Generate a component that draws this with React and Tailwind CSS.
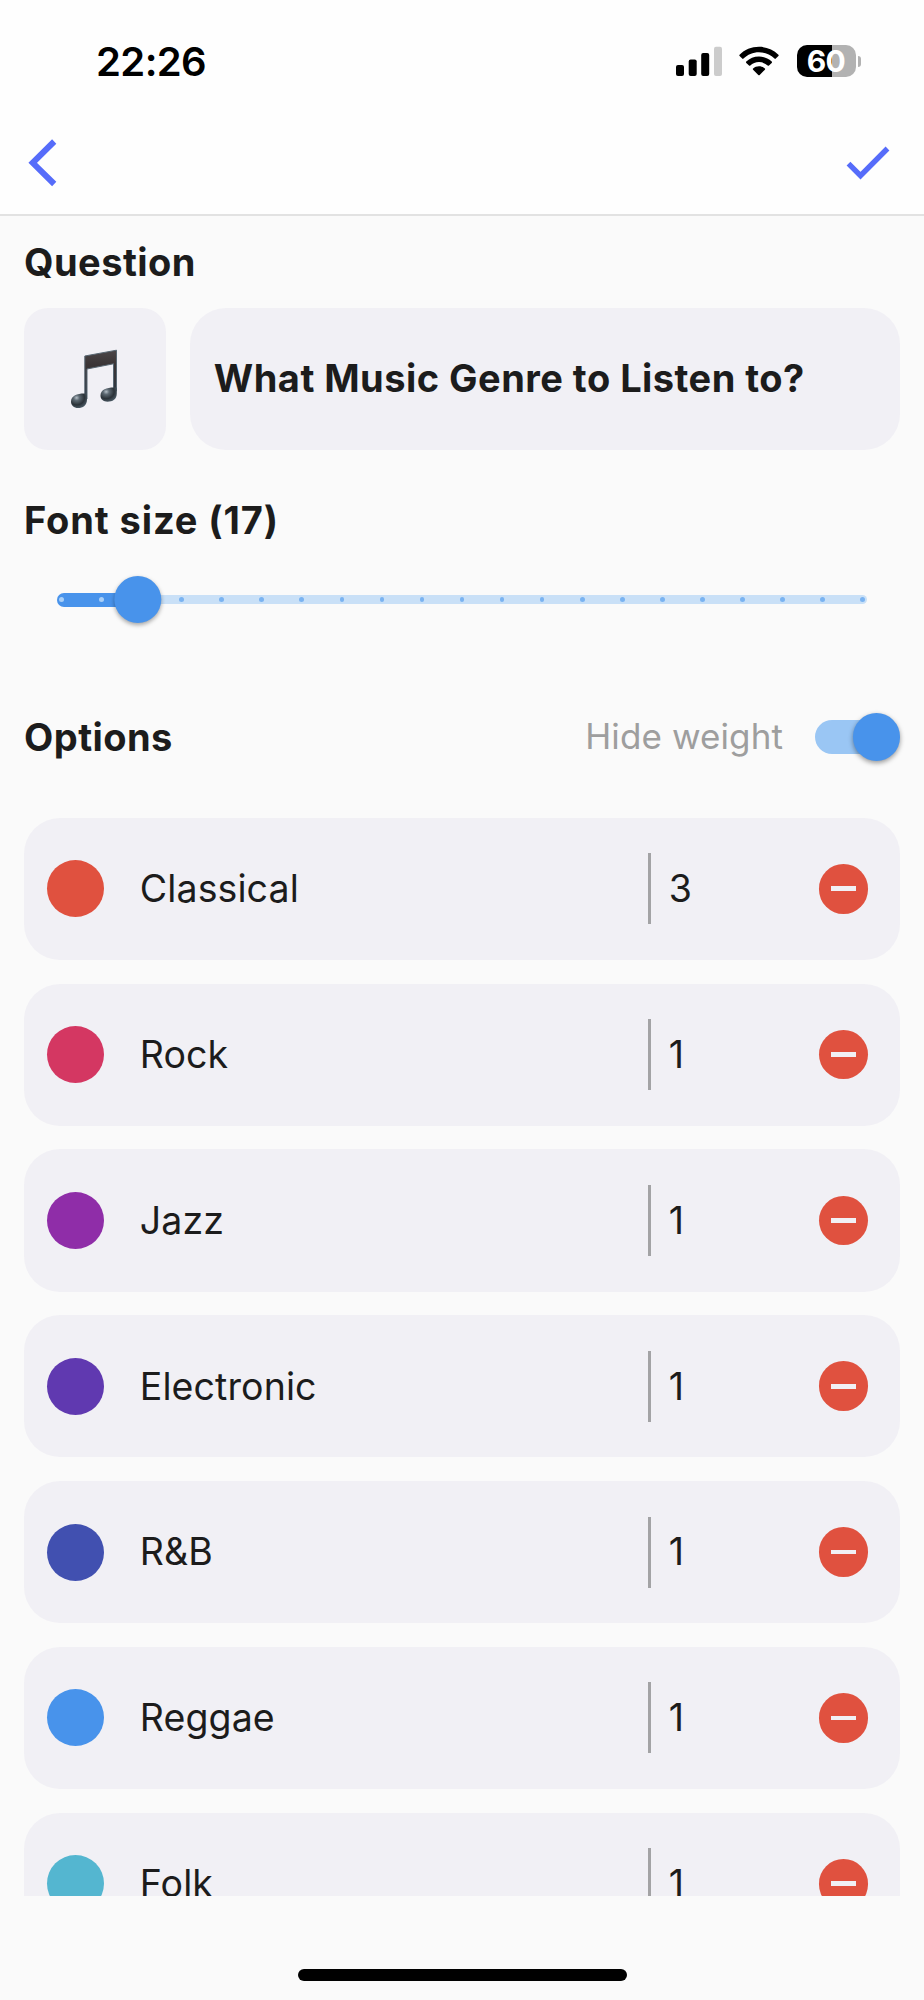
import React, { useState } from 'react';

const initialOptions = [
  { id: 1, name: 'Classical', weight: 3, color: 'bg-[#e0513f]' },
  { id: 2, name: 'Rock', weight: 1, color: 'bg-[#d43762]' },
  { id: 3, name: 'Jazz', weight: 1, color: 'bg-[#8f2da8]' },
  { id: 4, name: 'Electronic', weight: 1, color: 'bg-[#6039b0]' },
  { id: 5, name: 'R&B', weight: 1, color: 'bg-[#4150b0]' },
  { id: 6, name: 'Reggae', weight: 1, color: 'bg-[#4893eb]' },
  { id: 7, name: 'Folk', weight: 1, color: 'bg-[#54b6d0]' },
];

const MIN_SIZE = 15;
const MAX_SIZE = 35;

const StatusBar = () => (
  <div className="flex h-[122px] items-center justify-between pl-[96px] pr-[63px]">
    <span className="pt-[2px] text-[40px] font-semibold leading-none tracking-[-0.6px] text-black">22:26</span>
    <div className="flex items-center">
      <svg width="48" height="30" viewBox="0 0 48 30" className="mr-[16px]">
        <rect x="1" y="19" width="8" height="11" rx="2" />
        <rect x="13.7" y="13.5" width="8" height="16.5" rx="2" />
        <rect x="26.2" y="7" width="8" height="23" rx="2" />
        <rect x="39" y="0.8" width="8" height="29.2" rx="2" fill="#cccccc" />
      </svg>
      <svg width="40" height="30" viewBox="0 0 40 30" className="mr-[17.5px]">
        <path d="M20 .8C27.6.8 34.5 3.8 39.4 8.7a.9.9 0 0 1 0 1.3L36.8 12.6a.9.9 0 0 1-1.3 0C31.4 8.7 26 6.3 20 6.3S8.6 8.7 4.5 12.6a.9.9 0 0 1-1.3 0L.6 10a.9.9 0 0 1 0-1.3C5.5 3.8 12.4.8 20 .8Z" />
        <path d="M20 10.6c5 0 9.4 1.9 12.7 5a.9.9 0 0 1 0 1.3L30 19.5a.9.9 0 0 1-1.3 0A12.8 12.8 0 0 0 20 16.1c-3.4 0-6.4 1.3-8.7 3.4a.9.9 0 0 1-1.3 0L7.3 16.9a.9.9 0 0 1 0-1.3C10.6 12.5 15 10.6 20 10.6Z" />
        <path d="M20 20.2c2.3 0 4.3.8 5.9 2.2.4.4.4.9 0 1.3l-5.2 5.2a1 1 0 0 1-1.4 0l-5.2-5.2a.9.9 0 0 1 0-1.3c1.6-1.4 3.6-2.2 5.9-2.2Z" />
      </svg>
      <div className="flex h-[32.5px] w-[59px] items-center justify-center rounded-[10px] bg-[linear-gradient(90deg,#000_59.5%,#b2b2b2_59.5%)]">
        <span className="text-[30px] font-bold leading-none tracking-[-0.5px] text-white">60</span>
      </div>
      <div className="ml-[2px] h-[11px] w-[3.5px] rounded-r-full bg-[#b2b2b2]" />
    </div>
  </div>
);

const NoteIcon = () => (
  <svg width="48" height="60" viewBox="0 0 48 60" className="-ml-[3px]">
    <defs>
      <linearGradient id="beam" x1="0" y1="0" x2="0" y2="1">
        <stop offset="0" stopColor="#4b4648" />
        <stop offset="0.3" stopColor="#3a3435" />
        <stop offset="1" stopColor="#2c3843" />
      </linearGradient>
      <radialGradient id="head" cx="0.35" cy="0.3" r="0.75">
        <stop offset="0" stopColor="#b4bec6" />
        <stop offset="0.25" stopColor="#5d6972" />
        <stop offset="0.65" stopColor="#2b3238" />
        <stop offset="1" stopColor="#4e5e69" />
      </radialGradient>
    </defs>
    <path d="M14.8 7 46.5 1.2V42H43.500V14.800L17 20V50h-2.200Z" fill="url(#beam)" stroke="#586772" strokeWidth="1" />
    <path d="M15.8 44.5C9 44 1 46 1 52.5 1 56.5 4 59 8 59c5 0 9-2.500 9-8.500v-6Z" fill="url(#head)" />
    <path d="M45 38.5c-7-.3-14.5 1.5-14.5 8 0 4 3 6.200 7 6.200 5 0 9.300-2.200 9.300-8.200v-6Z" fill="url(#head)" />
  </svg>
);

const Slider = ({ value }) => {
  const steps = MAX_SIZE - MIN_SIZE;
  const offset = `${((value - MIN_SIZE) / steps) * 100}%`;

  return (
    <div className="relative mx-[33px] flex h-[48px] items-center">
      <div className="h-[9.5px] w-full rounded-full bg-[#c9e0f7]" />
      <div
        className="absolute left-0 top-[16.9px] h-[14.2px] rounded-l-full bg-[#4893eb]"
        style={{ width: offset }}
      />
      <div className="absolute inset-x-[2.3px] inset-y-0 flex items-center justify-between">
        {Array.from({ length: steps + 1 }, (_, i) => (
          <span
            key={i}
            className={`size-[4.8px] rounded-full ${i + MIN_SIZE <= value ? 'bg-[#a9cff7]' : 'bg-[#7ab3f1]'}`}
          />
        ))}
      </div>
      <div
        className="absolute top-[0.3px] size-[47.4px] -translate-x-1/2 rounded-full bg-[#4893eb] shadow-[0_2px_4px_rgba(0,0,0,0.35)]"
        style={{ left: offset }}
      />
    </div>
  );
};

const Switch = ({ checked, onChange }) => (
  <button
    type="button"
    role="switch"
    aria-checked={checked}
    onClick={onChange}
    className="relative flex h-[47.4px] w-[85.3px] items-center"
  >
    <span className={`h-[33.6px] w-[80px] rounded-full ${checked ? 'bg-[#9ac6f4]' : 'bg-gray-300'}`} />
    <span
      className={`absolute top-0 size-[47.4px] rounded-full shadow-[0_2px_5px_rgba(0,0,0,0.4)] ${
        checked ? 'right-0 bg-[#4893eb]' : 'left-0 bg-white'
      }`}
    />
  </button>
);

const OptionRow = ({ option, onRemove }) => (
  <li className="flex h-[142.15px] shrink-0 items-center rounded-[36px] bg-[#f1f0f5] pl-[23.3px] pr-[32px]">
    <span className={`-ml-[0.3px] size-[57px] shrink-0 rounded-full ${option.color}`} />
    <span className="ml-[35.8px] flex-1 text-[37.5px] leading-none tracking-[0.1px]">{option.name}</span>
    <span className="h-[71px] w-[3px] bg-[#a3a3a5]" />
    <span className="ml-[17.5px] w-[150px] text-[37.5px] leading-none">{option.weight}</span>
    <button
      type="button"
      aria-label="Remove"
      onClick={onRemove}
      className="flex size-[49.6px] shrink-0 items-center justify-center rounded-full bg-[#e0513f]"
    >
      <span className="h-[4.6px] w-[24.8px] bg-[#f1f0f5]" />
    </button>
  </li>
);

const App = () => {
  const [options, setOptions] = useState(initialOptions);
  const [hideWeight, setHideWeight] = useState(true);
  const fontSize = 17;

  return (
    <div className="flex h-[2000px] w-[924px] flex-col overflow-hidden bg-[#fafafa] font-['Inter',sans-serif] text-[#1c1c1c]">
      <header className="h-[215.5px] shrink-0 border-b-[2.4px] border-[#e2e2e2] bg-[#fefefe]">
        <StatusBar />
        <nav className="flex h-[82px] items-center justify-between pl-[26px] pr-[32.5px]">
          <svg width="34" height="50" viewBox="0 0 34 50" fill="none" stroke="#566cfa" strokeWidth="6">
            <path d="M28.2 3.5 6.7 24.8l21.5 21.200" />
          </svg>
          <svg width="46" height="36" viewBox="0 0 46 36" fill="none" stroke="#566cfa" strokeWidth="5.4">
            <path d="m2.5 18.7 12 11.900L41.500 3.500" />
          </svg>
        </nav>
      </header>

      <main className="flex h-[1680.2px] shrink-0 flex-col overflow-hidden pl-[24px] pr-[23.7px] pt-[24px]">
        <h2 className="text-[38px] font-bold leading-[44px] tracking-[0.45px]">Question</h2>
        <div className="mt-[24.5px] flex gap-[23.7px]">
          <div className="flex size-[142.15px] shrink-0 items-center justify-center rounded-[24px] bg-[#f1f0f5]">
            <NoteIcon />
          </div>
          <div className="flex flex-1 items-center rounded-[36px] bg-[#f1f0f5] pb-[2px] pl-[24px]">
            <span className="text-[38px] font-bold leading-none tracking-[0.47px]">What Music Genre to Listen to?</span>
          </div>
        </div>

        <h2 className="mt-[47.5px] text-[38px] font-bold leading-[44px] tracking-[0.9px]">Font size ({fontSize})</h2>
        <div className="mt-[34px]">
          <Slider value={fontSize} />
        </div>

        <div className="mt-[89.5px] flex items-center">
          <h2 className="flex-1 text-[38px] font-bold leading-none tracking-[0.45px]">Options</h2>
          <span className="mr-[32px] text-[35px] leading-none tracking-[0.1px] text-[#9e9e9e]">Hide weight</span>
          <Switch checked={hideWeight} onChange={() => setHideWeight(!hideWeight)} />
        </div>

        <ul className="mt-[57.2px] flex flex-col gap-[23.7px]">
          {options.map((option) => (
            <OptionRow
              key={option.id}
              option={option}
              onRemove={() => setOptions(options.filter((o) => o.id !== option.id))}
            />
          ))}
        </ul>
      </main>

      <footer className="flex flex-1 items-end justify-center pb-[19px]">
        <div className="h-[12px] w-[329px] rounded-full bg-black" />
      </footer>
    </div>
  );
};

export default App;
